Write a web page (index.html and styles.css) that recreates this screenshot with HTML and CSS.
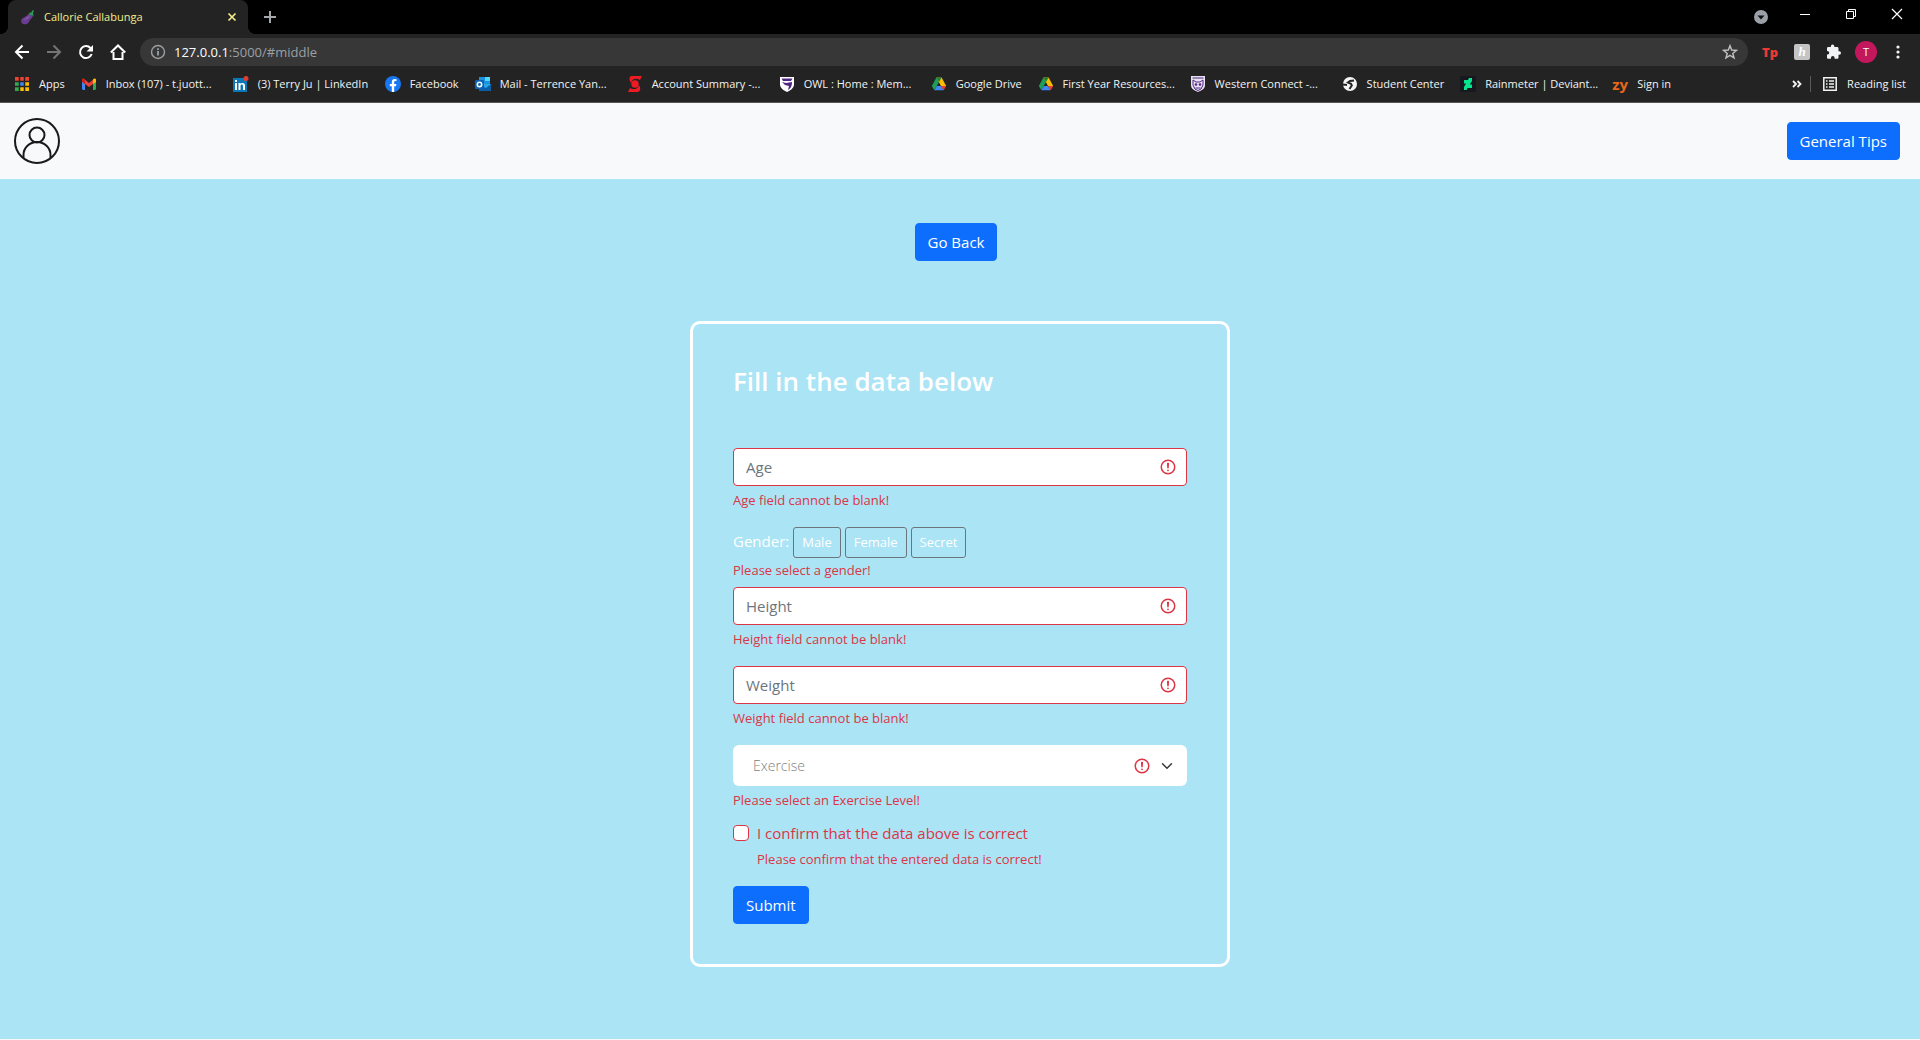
FILE: index.html
```html
<!DOCTYPE html>
<html lang="en">
<head>
<meta charset="utf-8">
<meta name="viewport" content="width=device-width, initial-scale=1">
<title>Callorie Callabunga</title>
<link rel="stylesheet" href="styles.css">
</head>
<body>
<svg class="sprite" aria-hidden="true">
  <symbol id="alert" viewBox="0 0 12 12"><circle cx="6" cy="6" r="4.5" fill="none" stroke="#dc3545"/><path fill="#dc3545" stroke="#dc3545" stroke-linejoin="round" d="M5.8 3.6h.4L6 6.5z"/><circle cx="6" cy="8.2" r=".6" fill="#dc3545"/></symbol>
  <symbol id="drive" viewBox="0 0 16 16"><path fill="#1e9e57" d="M5.400 1.500 8 6 3.400 14.300.8 10z"/><path fill="#fbbc04" d="M5.400 1.500h5.200L15.200 10H10z"/><path fill="#188038" d="M5.400 1.500h5.200L8 6z"/><path fill="#4285f4" d="M5.800 10H10l2.600 4.300H3.400z"/><path fill="#ea4335" d="M10 10h5.200l-2.600 4.300z"/></symbol>
</svg>

<header class="browser">
  <div class="tabs">
    <div class="tab">
      <svg class="icon" viewBox="0 0 16 16"><path fill="#6b3d91" d="M10.500 4.200c2.200.8 2.800 2.800 1.600 4.600-1.400 1.600-2 2-3 4-1.400 2.600-4.600 3.200-6.600 1.900-2-1.600-1.600-4.500.8-5.900C6 7.300 7.300 6.800 8 5.500c.5-.9 1.500-1.500 2.500-1.300z"/><path fill="#9266b5" d="M9.500 6c-.9 2.100-3.200 2.700-4.600 4.100L4 11.500c2-1.500 5.500-2 5.500-5.500z"/><path fill="#2d9a55" d="m9 3.700 2.300-.2 1.500-2.400 1.200.7-1 2.300.6 3.300-1.700-1.300-1.800.2z"/></svg>
      <span class="tab-title">Callorie Callabunga</span>
      <button class="plain" aria-label="Close tab"><svg class="icon" viewBox="0 0 16 16"><path d="m4.500 4.500 7 7m0-7-7 7" stroke="#f2ec8d" stroke-width="1.700"/></svg></button>
    </div>
    <button class="plain tool" aria-label="New tab"><svg class="icon" viewBox="0 0 16 16"><path d="M8 2v12M2 8h12" stroke="#a4a7ab" stroke-width="2"/></svg></button>
    <button class="plain tool search-tabs" aria-label="Search tabs"><svg class="icon" viewBox="0 0 16 16"><circle cx="8" cy="8" r="7" fill="#9aa0a6"/><path d="M4.500 6.500h7L8 10.500z" fill="#111"/></svg></button>
    <button class="plain window" aria-label="Minimize"><svg class="icon" viewBox="0 0 16 16"><path d="M3 8.500h10" stroke="#fff"/></svg></button>
    <button class="plain window" aria-label="Restore"><svg class="icon" viewBox="0 0 16 16"><path d="M3.500 5.500h7v7h-7zM5.500 5V3.500h7v7H11" fill="none" stroke="#fff"/></svg></button>
    <button class="plain window" aria-label="Close"><svg class="icon" viewBox="0 0 16 16"><path d="m3 3 10 10m0-10L3 13" stroke="#fff" stroke-width="1.200"/></svg></button>
  </div>

  <div class="toolbar">
    <button class="plain tool" aria-label="Back"><svg class="icon" viewBox="0 0 16 16"><path d="M15 8H2m6.500-6.500L2 8l6.500 6.500" fill="none" stroke="#fff" stroke-width="2"/></svg></button>
    <button class="plain tool" aria-label="Forward"><svg class="icon" viewBox="0 0 16 16"><path d="M1 8h13M7.500 1.500 14 8l-6.500 6.500" fill="none" stroke="#757575" stroke-width="2"/></svg></button>
    <button class="plain tool" aria-label="Reload"><svg class="icon" viewBox="0 0 16 16"><path d="M12.500 4A6 6 0 1 0 13.700 10" fill="none" stroke="#fff" stroke-width="2"/><path d="M15 1v6.500H8.500z" fill="#fff"/></svg></button>
    <button class="plain tool" aria-label="Home"><svg class="icon" viewBox="0 0 16 16"><path d="M3.500 8v7h9V8M.8 8.500 8 1.500l7.200 7" fill="none" stroke="#fff" stroke-width="2"/></svg></button>
    <div class="omnibox">
      <svg class="icon" viewBox="0 0 16 16"><circle cx="8" cy="8" r="6.500" fill="none" stroke="#9aa0a6" stroke-width="1.400"/><path d="M8 7v4.500M8 4.200v1.800" stroke="#9aa0a6" stroke-width="1.800"/></svg>
      <div class="address" role="textbox" aria-label="Address" contenteditable="true" spellcheck="false"><span class="host">127.0.0.1</span>:5000/#middle</div>
      <button class="plain" aria-label="Bookmark this page"><svg class="icon" viewBox="0 0 16 16"><path d="m8 1.800 1.700 4.300 4.700.3-3.600 3 1.200 4.500-4-2.500-4 2.500 1.200-4.500-3.600-3 4.700-.3z" fill="none" stroke="#bdbdbd" stroke-width="1.500"/></svg></button>
    </div>
    <button class="plain tool tp" aria-label="Tp extension">Tp</button>
    <button class="plain tool" aria-label="Honey"><span class="honey">h</span></button>
    <button class="plain tool" aria-label="Extensions"><svg class="icon" viewBox="0 0 16 16"><path fill="#f1f3f4" d="M13.300 7.300h-.8V4.400c0-.7-.6-1.300-1.300-1.300H8.300v-.8a1.700 1.700 0 0 0-3.400 0v.8H2.300C1.600 3.100 1 3.700 1 4.400v2.500h.8a1.900 1.900 0 0 1 0 3.700H1v2.800c0 .7.6 1.300 1.300 1.300H5v-.9a1.800 1.800 0 0 1 3.600 0v.9h2.600c.7 0 1.300-.6 1.300-1.300v-2.700h.8a1.700 1.700 0 0 0 0-3.400z"/></svg></button>
    <button class="plain tool" aria-label="Profile"><span class="avatar">T</span></button>
    <button class="plain tool" aria-label="Menu"><svg class="icon" viewBox="0 0 16 16" fill="#f1f3f4"><circle cx="8" cy="3" r="1.600"/><circle cx="8" cy="8" r="1.600"/><circle cx="8" cy="13" r="1.600"/></svg></button>
  </div>

  <nav class="bookmarks" aria-label="Bookmarks">
    <a href="#apps" class="bookmark"><svg class="icon" viewBox="0 0 16 16"><path fill="#ea4335" d="M1 1h4v4H1zM6 1h4v4H6zM11 1h4v4h-4z"/><path fill="#34a853" d="M1 6h4v4H1zM1 11h4v4H1z"/><path fill="#4285f4" d="M6 6h4v4H6z"/><path fill="#fbbc04" d="M11 6h4v4h-4zM6 11h4v4H6zM11 11h4v4h-4z"/><path d="M5.500 0v16m5-16v16M0 5.500h16M0 10.500h16" stroke="#232323" stroke-width="1.500"/></svg>Apps</a>
    <a href="#mail" class="bookmark wide"><svg class="icon" viewBox="0 0 16 16"><path fill="#4285f4" d="M1 4h3v10H2l-1-1z"/><path fill="#34a853" d="M12 4h3v9l-1 1h-2z"/><path fill="#ea4335" d="m1 3.500 1.500-1L8 7l5.500-4.500L12 8l-4 3-4-3z"/><path fill="#c5221f" d="M1 4c0-1.500 1.500-2 3-.500V8L1 6z"/><path fill="#fbbc04" d="M15 4c0-1.500-1.500-2-3-.500V8l3-2z"/></svg>Inbox (107) - t.juott...</a>
    <a href="#linkedin" class="bookmark wide"><svg class="icon" viewBox="0 0 16 16"><path fill="#0a77b7" d="M0 2h14v14H0z"/><path fill="#fff" d="M2 7h2v7H2zM2 4h2v2H2zM5.500 7h2v1c1-1.600 4.500-1.600 4.500 1.500V14h-2v-4c0-2-2.500-2-2.500 0v4h-2z"/><circle cx="13" cy="2.500" r="2.500" fill="#e33b32"/></svg>(3) Terry Ju | LinkedIn</a>
    <a href="#facebook" class="bookmark"><svg class="icon" viewBox="0 0 16 16"><circle cx="8" cy="8" r="8" fill="#1877f2"/><path fill="#fff" d="M6.800 16v-5.700h-2V8h2V6.200c0-2 1.200-3.200 3-3.200l1.700.2v1.900h-1c-1 0-1.300.6-1.300 1.300V8h2.200l-.4 2.300H9.200V16z"/></svg>Facebook</a>
    <a href="#outlook" class="bookmark wide"><svg class="icon" viewBox="0 0 16 16"><path fill="#1b91df" d="M4 1h11v7H4z"/><path fill="#50d9ff" d="M10 1h5v4h-5z"/><path fill="#28a8ea" d="M4 8h12v7H4z"/><path fill="#0a5ea8" d="m4 9 7 3 5-4v7H4z"/><rect y="4" width="9" height="9" rx="1" fill="#0864b8"/><circle cx="4.500" cy="8.500" r="2.200" fill="none" stroke="#fff" stroke-width="1.500"/></svg>Mail - Terrence Yan...</a>
    <a href="#account" class="bookmark wide"><svg class="icon" viewBox="0 0 16 16"><path fill="#ed1b24" d="M4 0h11l-2 4C9 1.500 5 3 4 7 2 4 2 1 4 0zM1 16l2-4c4 2.500 8 1 9-3 2 3 1.500 6-1 7z"/><circle cx="8" cy="8" r="3.700" fill="#ed1b24"/></svg>Account Summary -...</a>
    <a href="#owl" class="bookmark wide"><svg class="icon" viewBox="0 0 16 16"><path fill="#fff" d="M1 1h14v7c0 4-3 6-7 8-4-2-7-4-7-8z"/><path fill="#4f2683" d="M2.500 2.500h11L12 5H4zM3 6l4 1 6-1c0 5-2 7-4 8l1-4-4-1z"/></svg>OWL : Home : Mem...</a>
    <a href="#google-drive" class="bookmark"><svg class="icon"><use href="#drive"/></svg>Google Drive</a>
    <a href="#resources" class="bookmark wide"><svg class="icon"><use href="#drive"/></svg>First Year Resources...</a>
    <a href="#western" class="bookmark wide"><svg class="icon" viewBox="0 0 16 16"><path fill="#e9e2f1" d="M1 0h14v9c0 4-3 5-7 7-4-2-7-3-7-7z"/><path fill="none" stroke="#4f2683" d="M2.500 2h11M3 4l3 2h4l3-2v5l-2 4-3 1.500L5 13 3 9z"/><circle cx="6" cy="8.500" r="1.300" fill="#4f2683"/><circle cx="10" cy="8.500" r="1.300" fill="#4f2683"/><path d="M5.500 12h5" stroke="#4f2683"/></svg>Western Connect -...</a>
    <a href="#student" class="bookmark"><svg class="icon" viewBox="0 0 16 16"><circle cx="8" cy="8" r="7" fill="#f5f5f5"/><path fill="none" stroke="#232323" stroke-width="2" d="M12 4.500 8 5 6 6.500l3 1.200.8 1.800L7.500 13M1 8.500l4 .5"/></svg>Student Center</a>
    <a href="#rainmeter" class="bookmark wide"><svg class="icon" viewBox="0 0 16 16"><path fill="#161a20" d="M0 0h16v16H0z"/><path fill="#05e58e" d="M9 2h3v3L9.800 8.500H12V12H7.500l-1 2H4v-3l2-3.500H4V4h4z"/></svg>Rainmeter | Deviant...</a>
    <a href="#signin" class="bookmark"><span class="zy">zy</span>Sign in</a>
    <button class="plain more" aria-label="More bookmarks"><svg class="icon" viewBox="0 0 16 16"><path d="m4 5 3 3-3 3m4.500-6 3 3-3 3" fill="none" stroke="#f1f3f4" stroke-width="1.800"/></svg></button>
    <button class="plain bookmark reading"><svg class="icon" viewBox="0 0 16 16"><path d="M1.800 1.800h12.400v12.400H1.800z" fill="none" stroke="#f1f3f4" stroke-width="1.500"/><path d="M4 5h1.500M4 8h1.500M4 11h1.500M7 5h5M7 8h5M7 11h5" stroke="#f1f3f4" stroke-width="1.500"/></svg>Reading list</button>
  </nav>
</header>

<div class="navbar">
  <a href="#profile" aria-label="Profile"><svg class="profile" viewBox="0 0 46 46" fill="none" stroke="#1a1a1a" stroke-width="2"><circle cx="23" cy="23" r="22"/><circle cx="23" cy="17" r="7.500"/><path d="M9.500 40V37a13.500 13 0 0 1 27 0v3"/></svg></a>
  <button class="btn">General Tips</button>
</div>

<main class="page">
  <button class="btn back">Go Back</button>
  <form class="card" novalidate>
    <h1 class="heading">Fill in the data below</h1>
    <div class="field">
      <input class="control" type="text" placeholder="Age" aria-label="Age">
      <svg class="mark"><use href="#alert"/></svg>
    </div>
    <p class="error">Age field cannot be blank!</p>
    <fieldset class="gender">
      <legend class="legend">Gender:</legend>
      <label class="choice"><input type="radio" name="gender">Male</label>
      <label class="choice"><input type="radio" name="gender">Female</label>
      <label class="choice"><input type="radio" name="gender">Secret</label>
    </fieldset>
    <p class="error tight">Please select a gender!</p>
    <div class="field">
      <input class="control" type="text" placeholder="Height" aria-label="Height">
      <svg class="mark"><use href="#alert"/></svg>
    </div>
    <p class="error">Height field cannot be blank!</p>
    <div class="field">
      <input class="control" type="text" placeholder="Weight" aria-label="Weight">
      <svg class="mark"><use href="#alert"/></svg>
    </div>
    <p class="error">Weight field cannot be blank!</p>
    <div class="field">
      <select class="control select" aria-label="Exercise level"><option>Exercise</option></select>
      <span class="mark marks"><svg class="alert"><use href="#alert"/></svg><svg class="chevron" viewBox="0 0 16 16"><path fill="none" stroke="#343a40" stroke-linecap="round" stroke-linejoin="round" stroke-width="2" d="m2 5 6 6 6-6"/></svg></span>
    </div>
    <p class="error tight">Please select an Exercise Level!</p>
    <div class="confirm">
      <input class="check" type="checkbox" id="confirm">
      <label for="confirm">I confirm that the data above is correct</label>
      <p class="error">Please confirm that the entered data is correct!</p>
    </div>
    <button class="btn submit" type="submit">Submit</button>
  </form>
</main>
</body>
</html>
```
FILE: styles.css
```css
*, *::before, *::after { box-sizing: border-box; }

body {
  margin: 0;
  min-height: 100vh;
  display: flex;
  flex-direction: column;
  font-family: "Open Sans", "Noto Sans", sans-serif;
  font-size: 15px;
  line-height: 24px;
  background: #f8f9fb;
}

button, input, select { font: inherit; }
svg { display: block; }
.sprite { position: absolute; width: 0; height: 0; }

.plain {
  display: flex;
  align-items: center;
  justify-content: center;
  padding: 0;
  border: 0;
  background: none;
  color: #fff;
}
.icon { width: 16px; height: 16px; flex: none; }
.tool { width: 32px; }

/* Browser frame */
.browser {
  background: #232323;
  border-bottom: 1px solid #555;
  color: #f1f3f4;
  font-size: 11px;
  line-height: 16px;
}
.tabs { display: flex; height: 34px; padding-left: 8px; background: #000; }
.tab {
  position: relative;
  display: flex;
  align-items: center;
  gap: 8px;
  width: 240px;
  margin-right: 6px;
  padding: 0 8px 0 12px;
  border-radius: 8px 8px 0 0;
  background: #232323;
  color: #f2ec8d;
}
.tab::before, .tab::after {
  content: "";
  position: absolute;
  bottom: 0;
  width: 8px;
  height: 8px;
}
.tab::before { left: -8px; background: radial-gradient(circle at 0 0, #000 8px, #232323 8px); }
.tab::after { right: -8px; background: radial-gradient(circle at 100% 0, #000 8px, #232323 8px); }
.tab-title { flex: 1; }
.search-tabs { margin-left: auto; margin-right: 5px; }
.window { width: 46px; height: 28px; }

.toolbar { display: flex; align-items: center; padding: 4px 6px; }
.omnibox {
  display: flex;
  align-items: center;
  gap: 8px;
  flex: 1;
  height: 28px;
  margin: 0 6px;
  padding: 0 10px;
  border-radius: 14px;
  background: #373737;
}
.address { flex: 1; color: #9aa0a6; font-size: 13px; outline: 0; }
.host { color: #fff; }
.tp { color: #ee3a36; font-size: 13px; font-weight: 800; }
.honey {
  width: 16px;
  border-radius: 2px;
  background: #c4c4c4;
  color: #fff;
  font: italic bold 13px/16px "Liberation Serif", serif;
}
.avatar {
  width: 22px;
  border-radius: 50%;
  background: #c2185b;
  font-size: 11px;
  line-height: 22px;
}

.bookmarks { display: flex; align-items: center; height: 32px; padding: 0 14px 4px; overflow: hidden; }
.bookmark {
  display: flex;
  align-items: center;
  flex: none;
  gap: 9px;
  margin-right: 16px;
  color: #f1f3f4;
  text-decoration: none;
  white-space: nowrap;
}
.bookmark.wide { width: 136px; }
.zy { width: 16px; color: #e8671b; font-size: 15px; font-weight: 700; }
.more { margin-left: auto; margin-right: 5px; }
.reading { margin: 0; padding-left: 11px; border-left: 1px solid #5a5a5a; }

/* Page */
.navbar {
  display: flex;
  align-items: center;
  justify-content: space-between;
  height: 76px;
  padding: 0 20px 0 14px;
}
.profile { width: 46px; height: 46px; }
.btn {
  padding: 6px 12px;
  border: 1px solid #0d6efd;
  border-radius: 4px;
  background: #0d6efd;
  color: #fff;
}
.page {
  flex: 1;
  display: flex;
  flex-direction: column;
  align-items: center;
  margin-bottom: 1px;
  padding: 44px 16px 72px;
  background: #abe4f5;
}
.back { margin-right: 8px; }
.card {
  width: 100%;
  max-width: 540px;
  margin-top: 60px;
  padding: 40px;
  border: 3px solid #fff;
  border-radius: 10px;
  color: #fff;
}
.heading { margin: 0 0 50px; font-size: 26px; font-weight: 600; line-height: 34px; }
.field { display: grid; align-items: center; }
.field > * { grid-area: 1 / 1; }
.control {
  width: 100%;
  min-width: 0;
  height: 38px;
  padding: 6px 36px 6px 12px;
  border: 1px solid #dc3545;
  border-radius: 4px;
  background: #fff;
  color: #212529;
}
.control::placeholder { color: #6c757d; opacity: 1; }
.mark { justify-self: end; width: 18px; height: 18px; margin-right: 10px; pointer-events: none; }
.marks { display: flex; align-items: center; gap: 10px; width: auto; margin-right: 14px; }
.alert { width: 18px; height: 18px; }
.chevron { width: 12px; height: 12px; }
.select {
  appearance: none;
  height: 41px;
  padding-left: 20px;
  border: 0;
  border-radius: 6px;
  color: #808080;
  font-size: 14px;
  font-weight: 300;
}
.error { margin: 4px 0 16px; color: #dc3545; font-size: 13px; line-height: 21px; }
.tight { margin-bottom: 6px; }
.gender { display: flex; align-items: flex-start; gap: 4px; margin: 0; padding: 0; border: 0; }
.legend { float: left; padding: 2px 0; }
.choice {
  padding: 4px 8px;
  border: 1px solid #6c757d;
  border-radius: 3px;
  font-size: 13px;
  line-height: 21px;
}
.choice input { appearance: none; width: 0; height: 0; margin: 0; }
.gender + .error { margin-top: 2px; }
.confirm { display: grid; grid-template-columns: 16px 1fr; column-gap: 8px; align-items: center; padding-top: 4px; color: #dc3545; }
.check {
  appearance: none;
  width: 16px;
  height: 16px;
  margin: 0;
  border: 1px solid #dc3545;
  border-radius: 4px;
  background: #fff;
}
.confirm .error { grid-column: 2; }
.submit { display: block; }
```
